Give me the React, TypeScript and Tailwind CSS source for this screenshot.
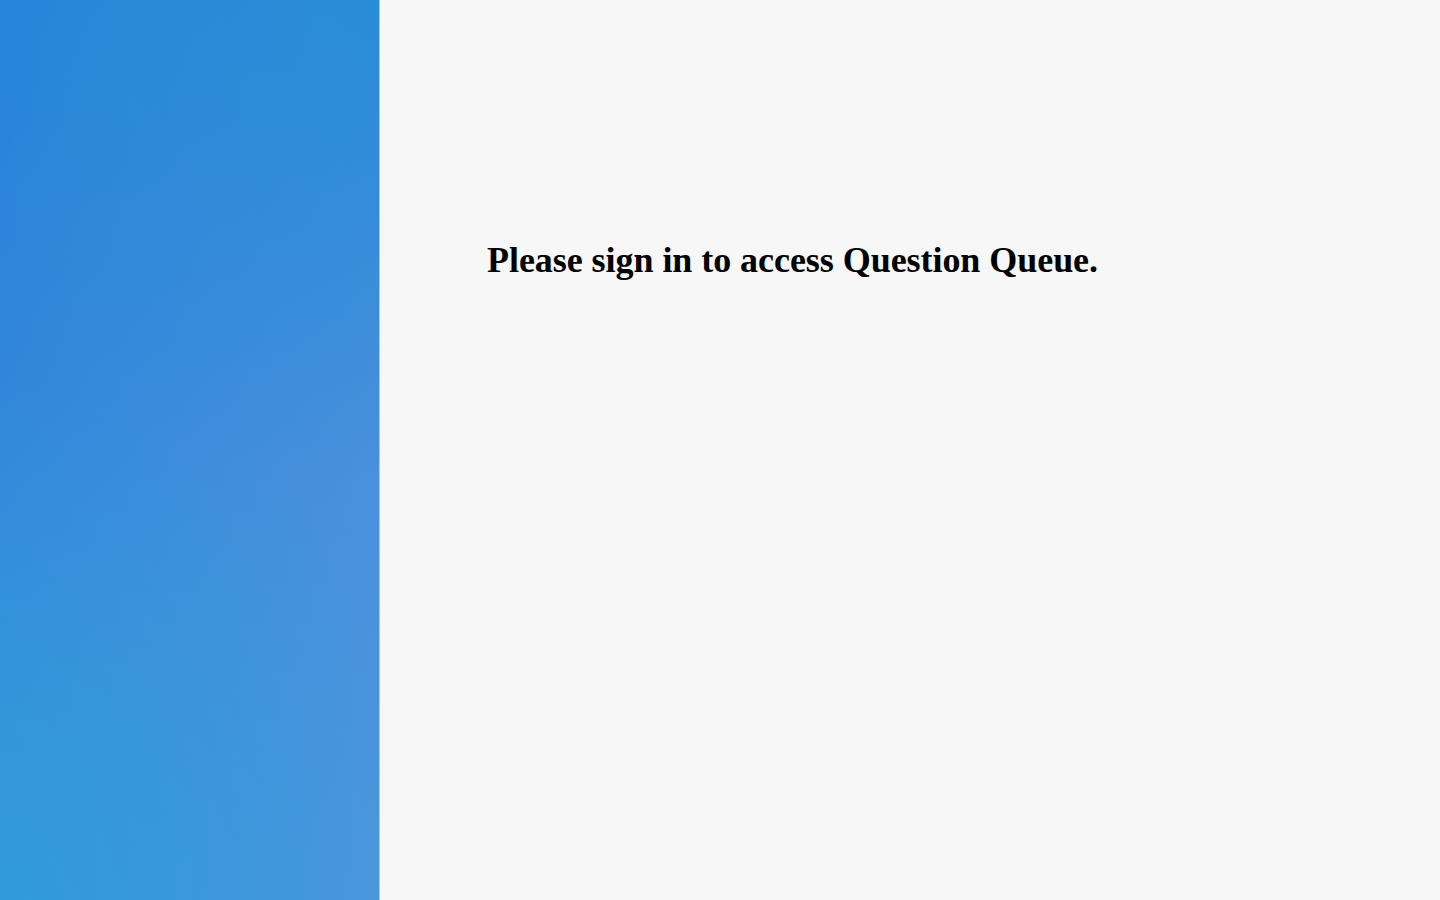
export default function App() {
  return (
    <div className="flex h-[900px] w-full bg-[#f7f7f7]">
      <aside className="w-[380px] shrink-0 border-r border-[#a3cbef] bg-[radial-gradient(circle_at_100%_0%,rgba(34,140,212,0.75)_0px,rgba(34,140,212,0)_480px),radial-gradient(circle_at_0%_100%,rgba(46,158,218,0.85)_0px,rgba(46,158,218,0)_520px),linear-gradient(to_bottom_right,#2782da_0%,#3e8cdc_50%,#5494de_100%)]" />
      <main className="flex-1 pl-[107px] pt-[236px]">
        <h1 className="font-['Liberation_Serif',serif] text-[36px] font-bold leading-[48px] tracking-[-0.05px] text-black">
          Please sign in to access Question Queue.
        </h1>
      </main>
    </div>
  );
}
